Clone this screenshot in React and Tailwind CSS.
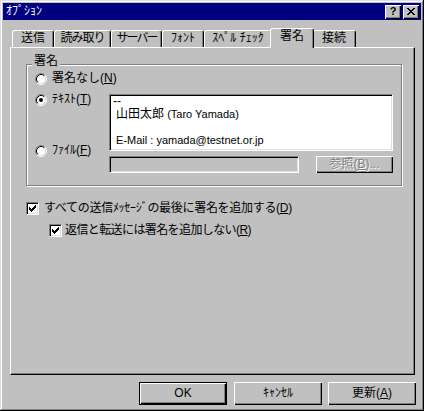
import React from 'react';

const Radio = ({ checked }) => (
  <svg width="12" height="12" viewBox="0 0 12 12" className="shrink-0">
    <circle cx="6" cy="6" r="4.5" fill="#fff" />
    <path d="M2.11 9.89A5.5 5.5 0 0 1 9.89 2.11" stroke="#808080" fill="none" />
    <path d="M9.89 2.11A5.5 5.5 0 0 1 2.11 9.89" stroke="#fff" fill="none" />
    <path d="M2.82 9.18A4.5 4.5 0 0 1 9.18 2.82" stroke="#000" fill="none" />
    <path d="M9.18 2.82A4.5 4.5 0 0 1 2.82 9.18" stroke="#dfdfdf" fill="none" />
    {checked && <circle cx="6" cy="6" r="2" fill="#000" />}
  </svg>
);

const Checkbox = () => (
  <div className="w-[13px] h-[13px] shrink-0 bg-white border border-t-[#808080] border-l-[#808080] border-r-white border-b-white shadow-[inset_1px_1px_#000,inset_-1px_-1px_#dfdfdf] flex items-center justify-center">
    <svg width="7" height="7" viewBox="0 0 7 7" shapeRendering="crispEdges">
      <path
        fill="#000"
        d="M6 0h1v1H6z M5 1h2v1H5z M0 2h1v1H0z M4 2h3v1H4z M0 3h2v1H0z M3 3h3v1H3z M0 4h5v1H0z M1 5h3v1H1z M2 6h1v1H2z"
      />
    </svg>
  </div>
);

const Tab = ({ label, w, active, cls = '' }) =>
  active ? (
    <div
      className={`relative z-10 -mx-[2px] -mb-px h-[20px] bg-[#c0c0c0] border-t border-l border-white border-r border-r-black rounded-t-[3px] shadow-[inset_-1px_0_#808080] flex justify-center pt-[1px] whitespace-nowrap ${cls}`}
      style={{ width: w + 4 }}
    >
      {label}
    </div>
  ) : (
    <div
      className={`h-[17px] bg-[#c0c0c0] border-t border-l border-white border-r border-r-black rounded-t-[3px] shadow-[inset_-1px_0_#808080] flex justify-center pt-[1px] whitespace-nowrap ${cls}`}
      style={{ width: w }}
    >
      {label}
    </div>
  );

const tabs = [
  { label: '送信', w: 42 },
  { label: '読み取り', w: 57, cls: 'tracking-[-1px]' },
  { label: 'サーバー', w: 51, cls: 'tracking-[-2px]' },
  { label: 'ﾌｫﾝﾄ', w: 42 },
  { label: 'ｽﾍﾟﾙ ﾁｪｯｸ', w: 68 },
  { label: '署名', w: 40, active: true },
  { label: '接続', w: 44 },
];

const raised =
  'bg-[#c0c0c0] shadow-[inset_1px_1px_#fff,inset_-1px_-1px_#000,inset_-2px_-2px_#808080]';

const sunken =
  'border border-t-[#808080] border-l-[#808080] border-r-white border-b-white shadow-[inset_1px_1px_#000,inset_-1px_-1px_#dfdfdf]';

export default function App() {
  return (
    <div className="w-[424px] h-[411px] bg-[#c0c0c0] p-[3px] text-[12px] leading-[13px] text-black [font-family:'Liberation_Sans','Noto_Sans_CJK_JP',sans-serif] shadow-[inset_-1px_-1px_#000,inset_1px_1px_#dfdfdf,inset_-2px_-2px_#808080,inset_2px_2px_#fff]">
      {/* title bar */}
      <div className="h-[17px] bg-[#000080] flex items-center pl-[3px] pr-[2px]">
        <span className="text-white">ｵﾌﾟｼｮﾝ</span>
        <div className="ml-auto flex gap-[2px]">
          <div className={`w-[16px] h-[14px] ${raised} flex items-center justify-center font-bold text-[11px] leading-none`}>
            ?
          </div>
          <div className={`w-[16px] h-[14px] ${raised} flex items-center justify-center`}>
            <svg width="8" height="7" viewBox="0 0 8 7" shapeRendering="crispEdges">
              <path
                fill="#000"
                d="M0 0h2v1H0z M6 0h2v1H6z M1 1h2v1H1z M5 1h2v1H5z M2 2h4v1H2z M3 3h2v1H3z M2 4h4v1H2z M1 5h2v1H1z M5 5h2v1H5z M0 6h2v1H0z M6 6h2v1H6z"
              />
            </svg>
          </div>
        </div>
      </div>

      {/* tabs */}
      <div className="mt-[8px] ml-[9px] h-[19px] flex items-end">
        {tabs.map((t) => (
          <Tab key={t.label} {...t} />
        ))}
      </div>

      {/* tab panel */}
      <div className="ml-[7px] w-[405px] h-[328px] border-l border-t border-white border-r border-b border-r-black border-b-black shadow-[inset_-1px_-1px_#808080] pl-[15px] pt-[16px]">
        {/* signature group */}
        <div className="relative w-[376px] h-[122px] border border-[#808080] shadow-[inset_1px_1px_#fff,1px_1px_#fff]">
          <span className="absolute left-[5px] -top-[10px] px-[2px] bg-[#c0c0c0]">署名</span>
          <div className="flex pl-[8px] pt-[7px]">
            <div className="w-[74px] flex flex-col whitespace-nowrap">
              <div className="h-[13px] flex items-center">
                <Radio />
                <span className="ml-[5px]">
                  署名なし(<span className="underline">N</span>)
                </span>
              </div>
              <div className="mt-[8px] h-[13px] flex items-center">
                <Radio checked />
                <span className="ml-[5px]">
                  ﾃｷｽﾄ(<span className="underline">T</span>)
                </span>
              </div>
              <div className="mt-[38px] h-[13px] flex items-center">
                <Radio />
                <span className="ml-[5px]">
                  ﾌｧｲﾙ(<span className="underline">F</span>)
                </span>
              </div>
            </div>
            <div className="mt-[22px] w-[284px]">
              <div className={`h-[57px] bg-white ${sunken} pl-[3px] whitespace-pre`}>
                <div>--</div>
                <div>
                  <span className="text-[11px]"> </span>山田太郎<span className="text-[11px]"> (Taro Yamada)</span>
                </div>
                <div className="h-[13px]" />
                <div className="text-[11px]"> E-Mail : yamada@testnet.or.jp</div>
              </div>
              <div className="mt-[5px] flex">
                <div className={`w-[190px] h-[17px] bg-[#c0c0c0] ${sunken}`} />
                <div className={`ml-auto w-[77px] h-[17px] ${raised} flex items-center justify-center text-[#808080] [text-shadow:1px_1px_0_#fff]`}>
                  参照(<span className="underline">B</span>)...
                </div>
              </div>
            </div>
          </div>
        </div>

        {/* options */}
        <div className="mt-[16px] h-[13px] flex items-center whitespace-nowrap">
          <Checkbox />
          <span className="ml-[5px] tracking-[-0.3px]">
            すべての送信ﾒｯｾｰｼﾞの最後に署名を追加する(<span className="underline">D</span>)
          </span>
        </div>
        <div className="mt-[9px] pl-[23px] h-[13px] flex items-center whitespace-nowrap">
          <Checkbox />
          <span className="ml-[3px] tracking-[-0.6px]">
            返信と転送には署名を追加しない(<span className="underline">R</span>)
          </span>
        </div>
      </div>

      {/* dialog buttons */}
      <div className="mt-[7px] flex h-[23px]">
        <div className="ml-[136px] w-[88px] h-[23px] border border-black bg-[#c0c0c0] shadow-[inset_1px_1px_#fff,inset_-1px_-1px_#000,inset_-2px_-2px_#808080] flex items-center justify-center">
          OK
        </div>
        <div className={`ml-[7px] w-[88px] h-[23px] ${raised} flex items-center justify-center`}>
          ｷｬﾝｾﾙ
        </div>
        <div className={`ml-[6px] w-[88px] h-[23px] ${raised} flex items-center justify-center`}>
          更新(<span className="underline">A</span>)
        </div>
      </div>
    </div>
  );
}
